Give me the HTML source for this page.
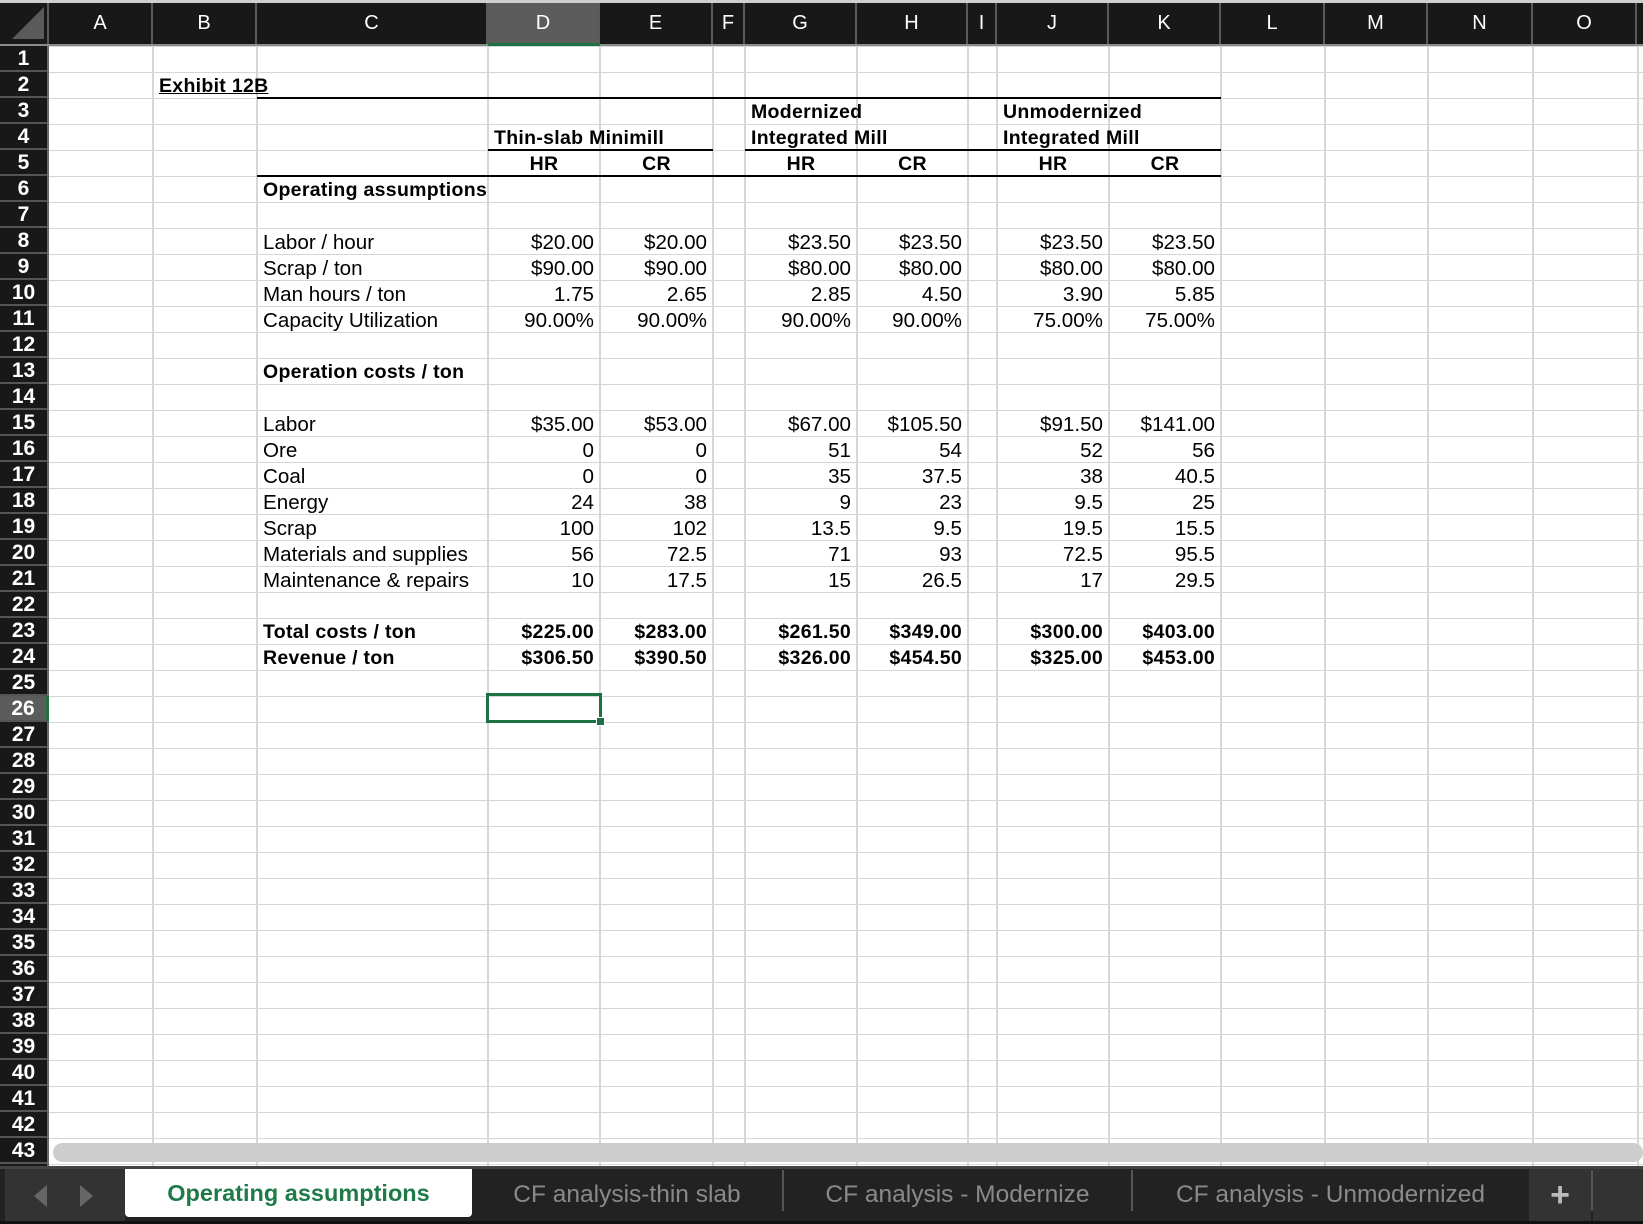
<!DOCTYPE html>
<html><head><meta charset="utf-8"><style>
*{margin:0;padding:0;box-sizing:border-box}
body{width:1643px;height:1224px;position:relative;overflow:hidden;background:#fff;font-family:"Liberation Sans",Arial,sans-serif}
#grid{position:absolute;left:0;top:46px;width:1643px;height:1122px;background:repeating-linear-gradient(to bottom,#d6d6d6 0 1px,transparent 1px 26px)}
.v{position:absolute;top:46px;height:1122px;width:2px;background:#d6d6d6}
#hdr{position:absolute;left:0;top:0;width:1643px;height:46px;background:#181818;border-top:3px solid #cfcfcf;border-bottom:2px solid #8a8a8a}
.h{position:absolute;top:3px;height:41px;line-height:41px;text-align:center;color:#fff;font-size:20px;border-right:2px solid #5a5a5a}
#rh{position:absolute;left:0;top:46px;width:49px;height:1122px;background:#181818;border-right:2px solid #6a6a6a}
.rn{position:absolute;left:0;width:47px;height:26px;line-height:26px;color:#fff;font-size:21px;font-weight:bold;text-align:center;border-bottom:2px solid #555;font-family:"Liberation Sans Narrow","Liberation Sans",sans-serif}
.c{position:absolute;height:26px;line-height:27px;font-size:20.6px;white-space:nowrap;padding:0 6px;color:#000}
.r{text-align:right}.b{font-weight:bold;letter-spacing:.3px;font-size:19.5px}.m{text-align:center}
.C{left:257px;width:231px}.D{left:488px;width:112px}.E{left:600px;width:113px}.G{left:745px;width:112px}.H{left:857px;width:111px}.J{left:997px;width:112px}.K{left:1109px;width:112px}
.ln{position:absolute;height:2px;background:#000}
.tab{position:absolute;top:1169px;height:52px;line-height:52px;text-align:center;font-size:24.5px;color:#8a8a8a}
</style></head><body>
<div id="grid"></div>
<div class="v" style="left:152px"></div><div class="v" style="left:256px"></div><div class="v" style="left:487px"></div><div class="v" style="left:599px"></div><div class="v" style="left:712px"></div><div class="v" style="left:744px"></div><div class="v" style="left:856px"></div><div class="v" style="left:967px"></div><div class="v" style="left:996px"></div><div class="v" style="left:1108px"></div><div class="v" style="left:1220px"></div><div class="v" style="left:1324px"></div><div class="v" style="left:1427px"></div><div class="v" style="left:1532px"></div><div class="v" style="left:1637px"></div>

<div id="hdr"></div>
<div class="h" style="left:0;width:49px"><svg width="46" height="40" style="position:absolute;left:2px;top:0"><polygon points="10,36 42,4 42,36" fill="#5a5a5a"/></svg></div>
<div class="h" style="left:49px;width:104px">A</div>
<div class="h" style="left:153px;width:104px">B</div>
<div class="h" style="left:257px;width:231px">C</div>
<div class="h" style="left:488px;width:112px;background:#5c5c5c;border-bottom:3px solid #1e7145;height:43px">D</div>
<div class="h" style="left:600px;width:113px">E</div>
<div class="h" style="left:713px;width:32px">F</div>
<div class="h" style="left:745px;width:112px">G</div>
<div class="h" style="left:857px;width:111px">H</div>
<div class="h" style="left:968px;width:29px">I</div>
<div class="h" style="left:997px;width:112px">J</div>
<div class="h" style="left:1109px;width:112px">K</div>
<div class="h" style="left:1221px;width:104px">L</div>
<div class="h" style="left:1325px;width:103px">M</div>
<div class="h" style="left:1428px;width:105px">N</div>
<div class="h" style="left:1533px;width:104px">O</div>

<div id="rh">
<div class="rn" style="top:0">1</div><div class="rn" style="top:26px">2</div><div class="rn" style="top:52px">3</div><div class="rn" style="top:78px">4</div><div class="rn" style="top:104px">5</div><div class="rn" style="top:130px">6</div><div class="rn" style="top:156px">7</div><div class="rn" style="top:182px">8</div><div class="rn" style="top:208px">9</div><div class="rn" style="top:234px">10</div><div class="rn" style="top:260px">11</div><div class="rn" style="top:286px">12</div><div class="rn" style="top:312px">13</div><div class="rn" style="top:338px">14</div><div class="rn" style="top:364px">15</div><div class="rn" style="top:390px">16</div><div class="rn" style="top:416px">17</div><div class="rn" style="top:442px">18</div><div class="rn" style="top:468px">19</div><div class="rn" style="top:494px">20</div><div class="rn" style="top:520px">21</div><div class="rn" style="top:546px">22</div><div class="rn" style="top:572px">23</div><div class="rn" style="top:598px">24</div><div class="rn" style="top:624px">25</div><div class="rn" style="top:650px;background:#5c5c5c;border-right:3px solid #1e7145;width:49px">26</div><div class="rn" style="top:676px">27</div><div class="rn" style="top:702px">28</div><div class="rn" style="top:728px">29</div><div class="rn" style="top:754px">30</div><div class="rn" style="top:780px">31</div><div class="rn" style="top:806px">32</div><div class="rn" style="top:832px">33</div><div class="rn" style="top:858px">34</div><div class="rn" style="top:884px">35</div><div class="rn" style="top:910px">36</div><div class="rn" style="top:936px">37</div><div class="rn" style="top:962px">38</div><div class="rn" style="top:988px">39</div><div class="rn" style="top:1014px">40</div><div class="rn" style="top:1040px">41</div><div class="rn" style="top:1066px">42</div><div class="rn" style="top:1092px">43</div>
</div>

<div class="c b" style="left:153px;top:73px;text-decoration:underline">Exhibit 12B</div>
<div class="ln" style="left:257px;width:964px;top:97px"></div>
<div class="c b G" style="top:99px">Modernized</div>
<div class="c b J" style="top:99px">Unmodernized</div>
<div class="c b D" style="top:125px">Thin-slab Minimill</div>
<div class="c b G" style="top:125px">Integrated Mill</div>
<div class="c b J" style="top:125px">Integrated Mill</div>
<div class="ln" style="left:488px;width:225px;top:149px"></div>
<div class="ln" style="left:745px;width:476px;top:149px"></div>
<div class="c b m D" style="top:151px">HR</div><div class="c b m E" style="top:151px">CR</div>
<div class="c b m G" style="top:151px">HR</div><div class="c b m H" style="top:151px">CR</div>
<div class="c b m J" style="top:151px">HR</div><div class="c b m K" style="top:151px">CR</div>
<div class="ln" style="left:257px;width:964px;top:175px"></div>
<div class="c b C" style="top:177px">Operating assumptions</div>

<div class="c C" style="top:229px">Labor / hour</div>
<div class="c C" style="top:255px">Scrap / ton</div>
<div class="c C" style="top:281px">Man hours / ton</div>
<div class="c C" style="top:307px">Capacity Utilization</div>
<div class="c r D" style="top:229px">$20.00</div><div class="c r E" style="top:229px">$20.00</div><div class="c r G" style="top:229px">$23.50</div><div class="c r H" style="top:229px">$23.50</div><div class="c r J" style="top:229px">$23.50</div><div class="c r K" style="top:229px">$23.50</div>
<div class="c r D" style="top:255px">$90.00</div><div class="c r E" style="top:255px">$90.00</div><div class="c r G" style="top:255px">$80.00</div><div class="c r H" style="top:255px">$80.00</div><div class="c r J" style="top:255px">$80.00</div><div class="c r K" style="top:255px">$80.00</div>
<div class="c r D" style="top:281px">1.75</div><div class="c r E" style="top:281px">2.65</div><div class="c r G" style="top:281px">2.85</div><div class="c r H" style="top:281px">4.50</div><div class="c r J" style="top:281px">3.90</div><div class="c r K" style="top:281px">5.85</div>
<div class="c r D" style="top:307px">90.00%</div><div class="c r E" style="top:307px">90.00%</div><div class="c r G" style="top:307px">90.00%</div><div class="c r H" style="top:307px">90.00%</div><div class="c r J" style="top:307px">75.00%</div><div class="c r K" style="top:307px">75.00%</div>

<div class="c b C" style="top:359px">Operation costs / ton</div>
<div class="c C" style="top:411px">Labor</div>
<div class="c C" style="top:437px">Ore</div>
<div class="c C" style="top:463px">Coal</div>
<div class="c C" style="top:489px">Energy</div>
<div class="c C" style="top:515px">Scrap</div>
<div class="c C" style="top:541px">Materials and supplies</div>
<div class="c C" style="top:567px">Maintenance &amp; repairs</div>
<div class="c r D" style="top:411px">$35.00</div><div class="c r E" style="top:411px">$53.00</div><div class="c r G" style="top:411px">$67.00</div><div class="c r H" style="top:411px">$105.50</div><div class="c r J" style="top:411px">$91.50</div><div class="c r K" style="top:411px">$141.00</div>
<div class="c r D" style="top:437px">0</div><div class="c r E" style="top:437px">0</div><div class="c r G" style="top:437px">51</div><div class="c r H" style="top:437px">54</div><div class="c r J" style="top:437px">52</div><div class="c r K" style="top:437px">56</div>
<div class="c r D" style="top:463px">0</div><div class="c r E" style="top:463px">0</div><div class="c r G" style="top:463px">35</div><div class="c r H" style="top:463px">37.5</div><div class="c r J" style="top:463px">38</div><div class="c r K" style="top:463px">40.5</div>
<div class="c r D" style="top:489px">24</div><div class="c r E" style="top:489px">38</div><div class="c r G" style="top:489px">9</div><div class="c r H" style="top:489px">23</div><div class="c r J" style="top:489px">9.5</div><div class="c r K" style="top:489px">25</div>
<div class="c r D" style="top:515px">100</div><div class="c r E" style="top:515px">102</div><div class="c r G" style="top:515px">13.5</div><div class="c r H" style="top:515px">9.5</div><div class="c r J" style="top:515px">19.5</div><div class="c r K" style="top:515px">15.5</div>
<div class="c r D" style="top:541px">56</div><div class="c r E" style="top:541px">72.5</div><div class="c r G" style="top:541px">71</div><div class="c r H" style="top:541px">93</div><div class="c r J" style="top:541px">72.5</div><div class="c r K" style="top:541px">95.5</div>
<div class="c r D" style="top:567px">10</div><div class="c r E" style="top:567px">17.5</div><div class="c r G" style="top:567px">15</div><div class="c r H" style="top:567px">26.5</div><div class="c r J" style="top:567px">17</div><div class="c r K" style="top:567px">29.5</div>

<div class="c b C" style="top:619px">Total costs / ton</div>
<div class="c b C" style="top:645px">Revenue / ton</div>
<div class="c b r D" style="top:619px">$225.00</div><div class="c b r E" style="top:619px">$283.00</div><div class="c b r G" style="top:619px">$261.50</div><div class="c b r H" style="top:619px">$349.00</div><div class="c b r J" style="top:619px">$300.00</div><div class="c b r K" style="top:619px">$403.00</div>
<div class="c b r D" style="top:645px">$306.50</div><div class="c b r E" style="top:645px">$390.50</div><div class="c b r G" style="top:645px">$326.00</div><div class="c b r H" style="top:645px">$454.50</div><div class="c b r J" style="top:645px">$325.00</div><div class="c b r K" style="top:645px">$453.00</div>

<div style="position:absolute;left:486px;top:693px;width:116px;height:30px;border:3px solid #1e7145"></div>
<div style="position:absolute;left:596px;top:717px;width:9px;height:9px;background:#1e7145;border:1px solid #fff"></div>

<div style="position:absolute;left:53px;top:1143px;width:1590px;height:19px;background:#cdcdcd;border-radius:10px"></div>

<div style="position:absolute;left:0;top:1166px;width:1643px;height:58px;background:#222;border-top:3px solid #444;border-bottom:3px solid #111"></div>
<div style="position:absolute;left:5px;top:1169px;width:120px;height:52px;background:#333"></div>
<svg style="position:absolute;left:30px;top:1182px" width="80" height="28"><polygon points="17,3 17,25 4,14" fill="#666"/><polygon points="50,3 50,25 63,14" fill="#666"/></svg>
<div class="tab" style="left:125px;width:347px;background:#fff;color:#1e7b48;border-radius:0 0 4px 4px;height:48px;line-height:48px;font-size:23.5px;font-weight:bold">Operating assumptions</div>
<div class="tab" style="left:472px;width:310px">CF analysis-thin slab</div>
<div style="position:absolute;left:782px;top:1170px;width:2px;height:41px;background:#555"></div>
<div class="tab" style="left:784px;width:347px">CF analysis - Modernize</div>
<div style="position:absolute;left:1131px;top:1170px;width:2px;height:41px;background:#555"></div>
<div class="tab" style="left:1133px;width:395px">CF analysis - Unmodernized</div>
<div class="tab" style="left:1529px;width:62px;background:#333;color:#bbb;font-size:34px;font-weight:bold">+</div>
<div style="position:absolute;left:1591px;top:1170px;width:2px;height:41px;background:#555"></div>
<div style="position:absolute;left:1593px;top:1169px;width:50px;height:52px;background:#333"></div>
</body></html>
